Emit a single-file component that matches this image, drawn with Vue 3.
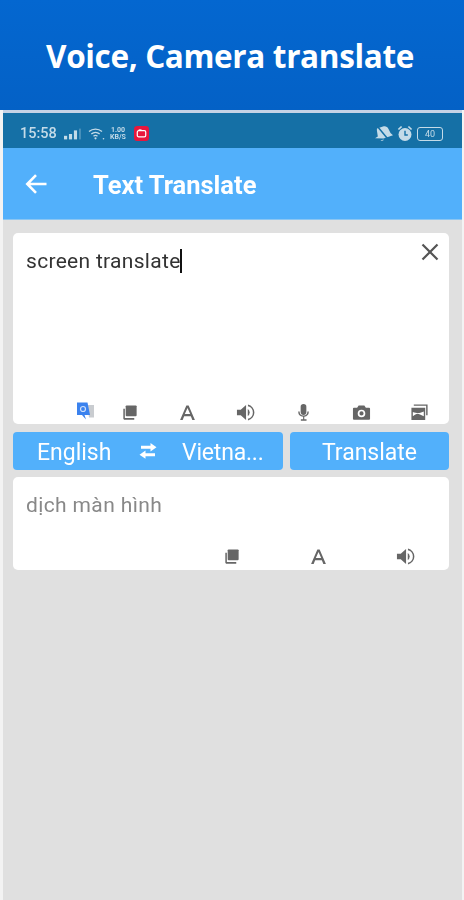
<script setup>
const row1 = ['copy', 'font', 'sound', 'mic', 'camera', 'image']
const row2 = ['copy', 'font', 'sound']
</script>

<template>
  <div class="page">
    <svg width="0" height="0" class="defs">
      <defs>
        <symbol id="copy" viewBox="0 0 20 20">
          <path d="M6 3.500a1 1 0 0 1 1-1h9.500a1 1 0 0 1 1 1V13a1 1 0 0 1-1 1H7a1 1 0 0 1-1-1z" />
          <path d="M3.500 6v10.200c0 .7.6 1.300 1.300 1.300H15v-1.600H5.100V6z" />
        </symbol>
        <symbol id="font" viewBox="0 0 20 20">
          <path d="M2.200 18 8.800 2.500h2.400L17.800 18h-2.700l-1.600-4h-7l-1.600 4zm5-6.300h5.600L10 5.200z" />
        </symbol>
        <symbol id="sound" viewBox="0 0 20 20">
          <path d="M1 7.200h4L10.600 2v16L5 12.800H1z" />
          <path d="M12.400 6.200a4.600 4.600 0 0 1 0 7.600z" />
          <path d="M12.600 1.600a8.600 8.600 0 0 1 0 16.800v-1.800a6.800 6.800 0 0 0 0-13.200z" />
        </symbol>
        <symbol id="mic" viewBox="0 0 20 20">
          <rect x="7" y="1" width="6" height="11.500" rx="3" />
          <path d="M4.400 9h1.500a4.100 4.100 0 0 0 8.200 0h1.500a5.600 5.600 0 0 1-4.800 5.500V17h2.400v1.600H7.200V17h2.400v-2.500A5.600 5.600 0 0 1 4.400 9z" />
        </symbol>
        <symbol id="camera" viewBox="0 0 20 20">
          <path fill-rule="evenodd" d="M7 2.500h6L14.600 5H18a1 1 0 0 1 1 1v10.500a1 1 0 0 1-1 1H2a1 1 0 0 1-1-1V6a1 1 0 0 1 1-1h3.400zM10 7a4 4 0 1 0 0 8 4 4 0 0 0 0-8zm0 1.800a2.200 2.200 0 1 1 0 4.400 2.200 2.200 0 0 1 0-4.400z" />
        </symbol>
        <symbol id="image" viewBox="0 0 20 20">
          <path d="M4 1.500h14.500V13H17V3H4z" />
          <path fill-rule="evenodd" d="M1.500 5H16v13H1.500zM3 9.500V14c2-1.600 3.500-2.600 5-2.600 1.600 0 3 1 6.500 2.600V9c-3 1.200-4.500 1.600-6 1.600S5 10.300 3 9.500z" />
        </symbol>
      </defs>
    </svg>

    <header class="banner">Voice, Camera translate</header>

    <main class="phone">
      <div class="status">
        <div class="status-group">
          <span class="clock">15:58</span>
          <svg class="signal" width="18" height="12" viewBox="0 0 20 12">
            <rect x="0" y="8" width="3.500" height="4" />
            <rect x="5.500" y="6" width="3.500" height="6" />
            <rect x="11" y="2" width="3.500" height="10" />
            <rect x="17" y="0" width="1.500" height="12" opacity=".45" />
          </svg>
          <svg class="wifi" width="17" height="13" viewBox="0 0 17 13">
            <path d="M1 4.500a10 10 0 0 1 13 0M3.300 7a6.500 6.500 0 0 1 8.400 0M5.500 9.300a3 3 0 0 1 4 0" fill="none" stroke="currentColor" stroke-width="1.300" />
            <circle cx="7.500" cy="11.300" r="1.100" fill="currentColor" />
            <circle cx="15.500" cy="11.800" r=".8" fill="currentColor" />
          </svg>
          <span class="speed"><b>1.00</b><b>KB/S</b></span>
          <svg class="rec" width="15" height="15" viewBox="0 0 16 16">
            <rect width="16" height="16" rx="3.500" fill="#e8163c" />
            <rect x="3.500" y="5" width="9" height="6.500" rx="1.500" fill="none" stroke="#fff" stroke-width="1.300" />
            <rect x="5" y="3.600" width="3" height="1.400" fill="#fff" />
          </svg>
        </div>
        <div class="status-group right">
          <svg class="bell" width="20" height="17" viewBox="0 0 20 17">
            <path d="M3 3.500 9 1.500c2.500-.8 4.500.3 5.500 2.400L16.500 8l2.500 2.300-9.500 3.300L1 13.200l2.800-1.600-.6-4.100C3 6 2.700 4.700 3 3.500z" />
            <path d="M10 14.500a2.500 2.500 0 0 1-3.500.8z" />
            <path d="M3.500 1.500 15.500 16" stroke="#1570a6" stroke-width="1.500" fill="none" />
          </svg>
          <svg class="alarm" width="16" height="17" viewBox="0 0 16 17">
            <circle cx="8" cy="9.500" r="6.500" />
            <path d="M.8 4 4 1 5.200 2 2 5zM15.200 4 12 1l-1.200 1L14 5z" />
            <path d="M8 5.800v4.200h2.800" fill="none" stroke="#1570a6" stroke-width="1.400" />
          </svg>
          <span class="battery"><i>40</i></span>
        </div>
      </div>

      <div class="appbar">
        <svg class="back" width="24" height="24" viewBox="0 0 24 24">
          <path d="M22.500 12H3.500M12 3.200 3.300 12l8.700 8.800" fill="none" stroke="#fff" stroke-width="2.600" />
        </svg>
        <h1>Text Translate</h1>
      </div>

      <div class="content">
        <section class="card input-card">
          <div class="input-text">
            <span>screen translate</span><span class="caret"></span>
            <svg class="close" width="20" height="20" viewBox="0 0 20 20">
              <path d="M2.500 2.500l15 15M17.500 2.500l-15 15" fill="none" stroke="#555" stroke-width="2.200" />
            </svg>
          </div>
          <div class="tools">
            <svg class="gt" width="18" height="20" viewBox="0 0 18 20">
              <path d="M10 4h7v12.500H12z" fill="#c9ccd0" />
              <path d="M0 1.500h10.500L13 14H7.500l1.500 4.500-4-4.500H0z" fill="#3b82ee" />
              <circle cx="6" cy="8" r="2.500" fill="none" stroke="#cfe0fb" stroke-width="1.200" />
            </svg>
            <svg v-for="n in row1" :key="n" class="ico"><use :href="'#' + n" /></svg>
          </div>
        </section>

        <div class="action-row">
          <div class="lang-bar">
            <span class="lang">English</span>
            <svg class="swap" width="20" height="18" viewBox="0 0 20 18">
              <path d="M12.500 1 18.500 5.200 12.500 9.400V6.800H3V3.800h9.500zM7.500 8.600v2.600H17v3H7.500V16.800L1.500 12.800z" />
            </svg>
            <span class="lang trunc">Vietna...</span>
          </div>
          <button class="translate">Translate</button>
        </div>

        <section class="card result-card">
          <p class="result-text">dịch màn hình</p>
          <div class="result-tools">
            <svg v-for="n in row2" :key="n" class="ico"><use :href="'#' + n" /></svg>
          </div>
        </section>
      </div>
    </main>
  </div>
</template>

<style>
html, body { margin: 0; padding: 0; background: #f3f3f3; }
</style>

<style scoped>
.page {
  width: 464px;
  height: 900px;
  display: flex;
  flex-direction: column;
  overflow: hidden;
  background: #f3f3f3;
  font-family: Roboto, "Liberation Sans", sans-serif;
}
.defs { position: absolute; }
.banner {
  height: 110px;
  flex: none;
  display: flex;
  align-items: center;
  justify-content: center;
  box-sizing: border-box;
  padding: 1px 4px 0 0;
  background: linear-gradient(180deg, #0467d0 0%, #0461c6 100%);
  color: #fff;
  font: 700 31.500px/1 "Open Sans", sans-serif;
  letter-spacing: -0.35px;
}
.phone {
  flex: 1;
  margin-left: 3px;
  margin-right: 2px;
  border-top: 3px solid #c5d3e6;
  display: flex;
  flex-direction: column;
  background: #e0e0e0;
  filter: blur(0.45px);
}
.status {
  height: 35px;
  flex: none;
  display: flex;
  align-items: center;
  justify-content: space-between;
  padding: 6px 19px 0 17px;
  box-sizing: border-box;
  background: #1570a6;
  color: #c4dbe8;
}
.status-group { display: flex; align-items: center; }
.status svg { fill: #c4dbe8; }
.clock { font-size: 14.500px; font-weight: 500; width: 42px; }
.signal { margin-left: 2px; }
.wifi { margin-left: 6px; }
.speed {
  display: flex;
  flex-direction: column;
  margin-left: 2px;
  width: 22px;
  font-size: 7px;
  line-height: 7px;
  text-align: center;
}
.rec { margin-left: 5px; }
.right { gap: 3px; }
.battery {
  width: 24px;
  height: 12px;
  border: 1.500px solid #c4dbe8;
  border-radius: 3px;
  display: flex;
  align-items: center;
  justify-content: center;
  margin-left: 1px;
  font-size: 9px;
}
.battery i { font-style: normal; }
.appbar {
  height: 72px;
  flex: none;
  display: flex;
  align-items: center;
  background: #52b0fb;
  border-bottom: 1px solid #8cc6f2;
  box-sizing: border-box;
}
.back { margin-left: 21px; }
h1 {
  margin: 2px 0 0 45px;
  font-size: 25.500px;
  font-weight: 700;
  color: #fff;
}
.content {
  padding: 13px 13px 0 10px;
  display: flex;
  flex-direction: column;
  gap: 7.500px;
}
.card {
  background: #fff;
  border-radius: 5px;
  display: flex;
  flex-direction: column;
  justify-content: space-between;
  box-sizing: border-box;
}
.input-card { height: 191px; padding: 0; }
.input-text {
  position: relative;
  padding: 15px 13px 0;
  display: flex;
  align-items: center;
  font-size: 21px;
  line-height: 26px;
  letter-spacing: .3px;
  color: #333;
}
.caret { width: 2px; height: 24px; background: #111; margin-left: -1px; }
.close { position: absolute; right: 9px; top: 9px; }
.tools {
  display: flex;
  align-items: center;
  height: 24px;
  padding-left: 64px;
  gap: 0;
}
.gt { flex: none; width: 18px; margin-right: 25px; margin-top: -3px; }
.ico {
  width: 19px;
  height: 19px;
  fill: #666;
  flex: none;
}
.tools .ico { margin-right: 39px; }
.tools .ico:last-child { margin-right: 0; }
.action-row { display: flex; gap: 7px; height: 38px; }
.lang-bar {
  width: 270px;
  display: flex;
  align-items: center;
  background: #52b0fb;
  border-radius: 4px;
  color: #fff;
  font-size: 23px;
  padding: 3px 0 0 24px;
  box-sizing: border-box;
}
.lang { width: 101px; }
.swap { fill: #fff; flex: none; margin-right: 24px; margin-top: -2px; }
.lang.trunc { width: auto; white-space: nowrap; letter-spacing: -.2px; }
.translate {
  width: 159px;
  height: 38px;
  border: 0;
  padding: 3px 0 0;
  background: #52b0fb;
  color: #fff;
  border-radius: 4px;
  font: 400 23px Roboto, sans-serif;
}
.result-card { height: 93px; padding: 0 0 3px; }
.result-text {
  margin: 15px 13px 0;
  font-size: 21px;
  line-height: 26px;
  letter-spacing: .37px;
  color: #888;
}
.result-tools {
  display: flex;
  justify-content: flex-end;
  gap: 68px;
  padding-right: 34px;
  height: 20px;
}
</style>
